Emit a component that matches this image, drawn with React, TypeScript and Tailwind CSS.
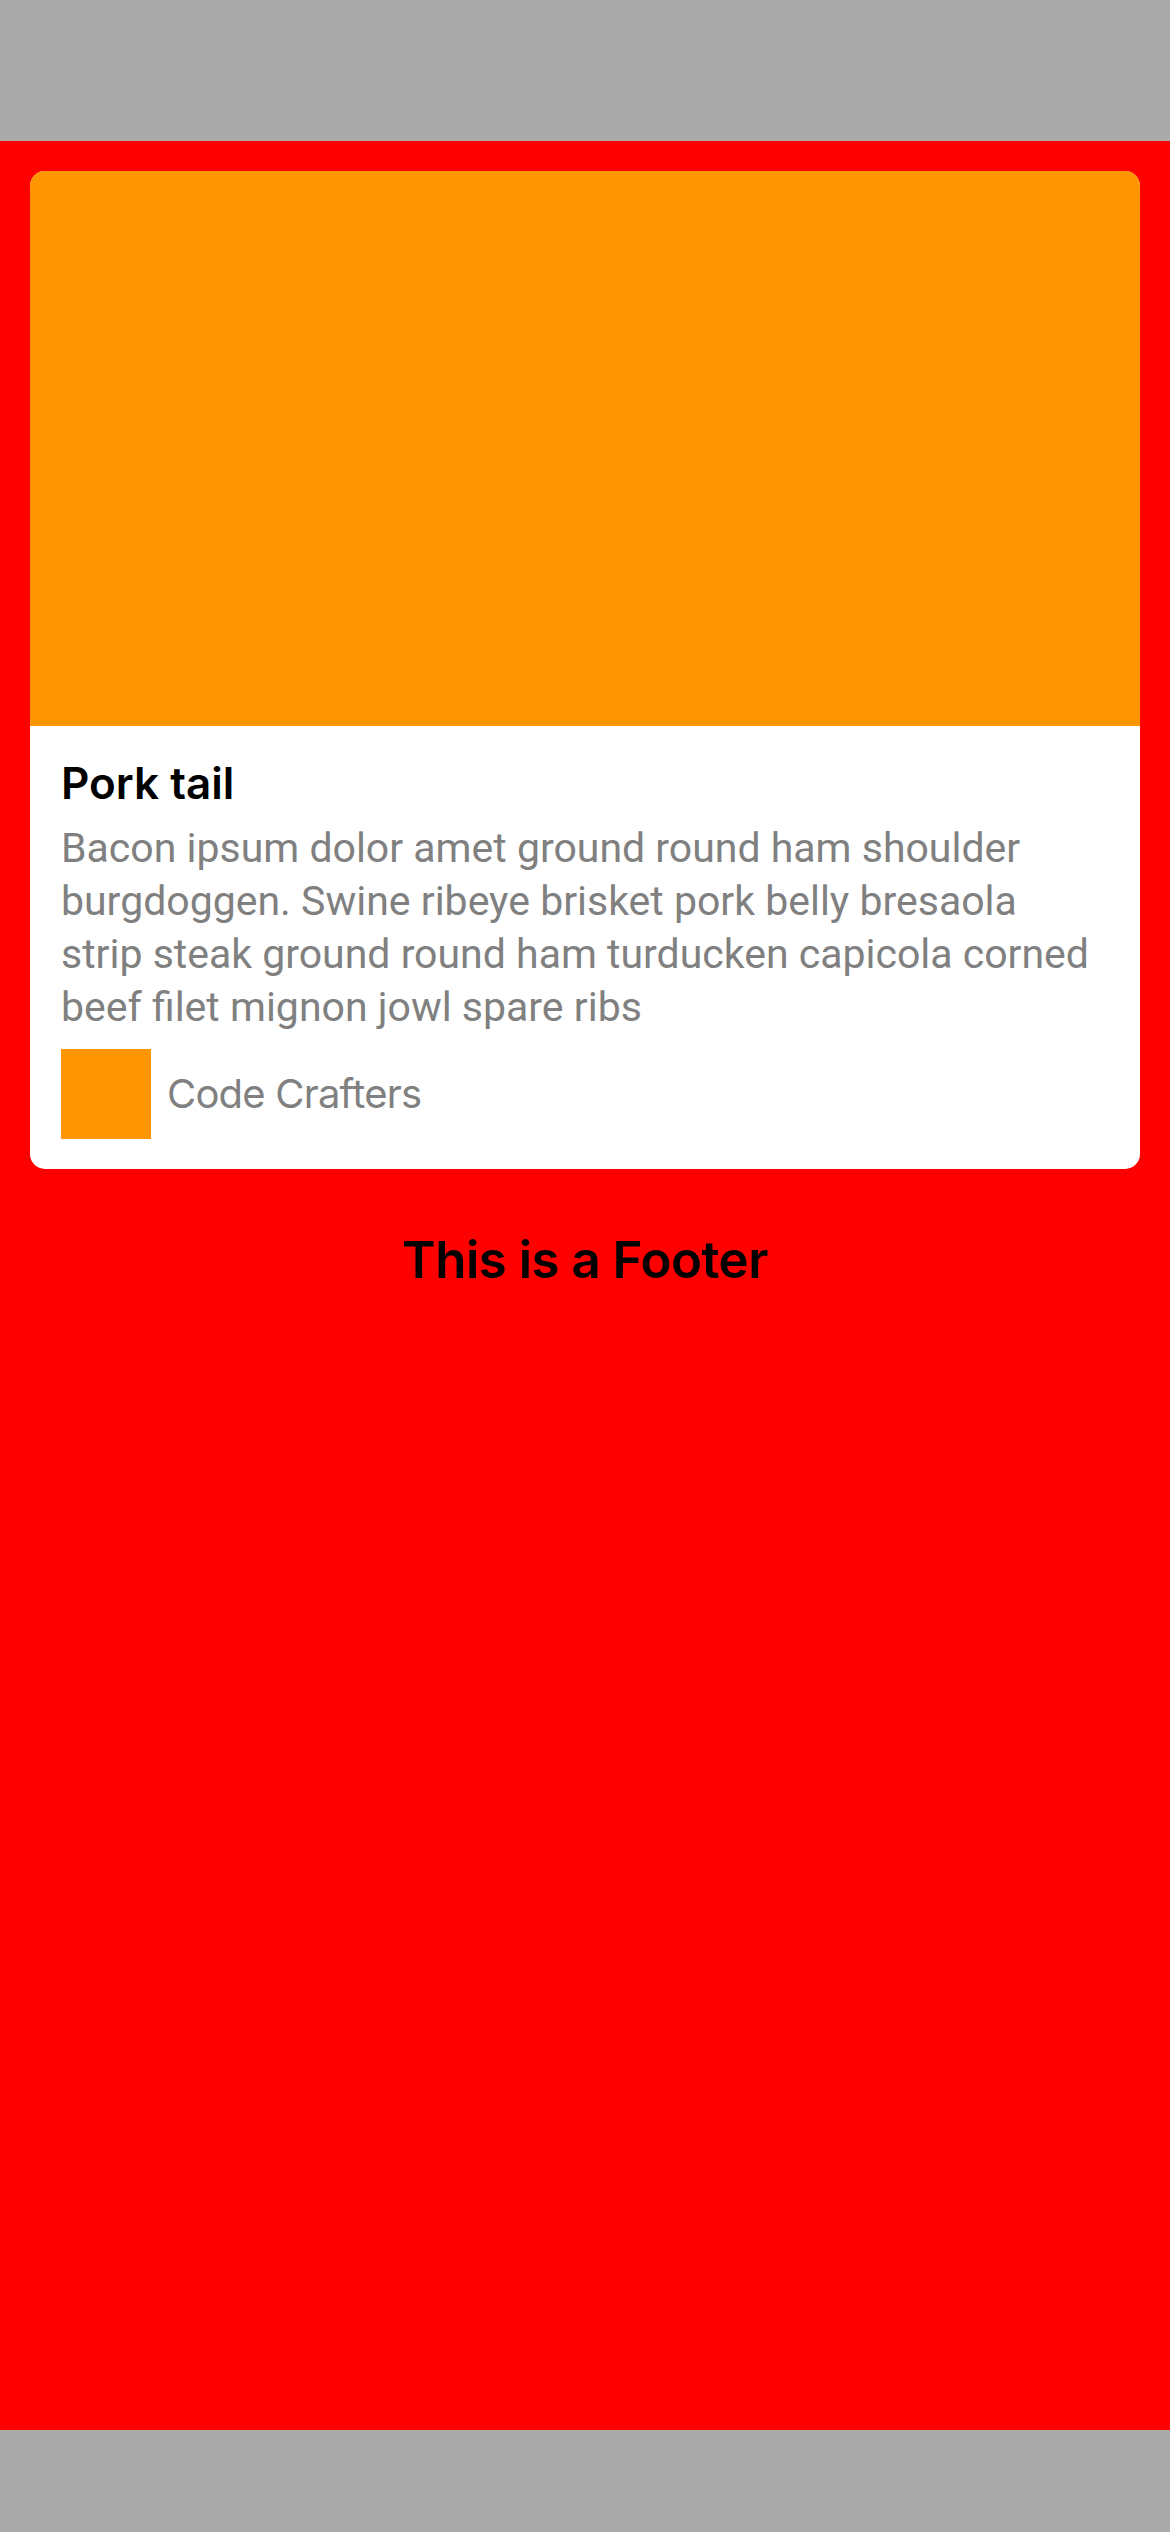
export default function App() {
  return (
    <div className="flex h-[2532px] w-[1170px] flex-col bg-[#aaaaaa] font-['Inter','Noto_Sans',sans-serif]">
      <div className="h-[141px] shrink-0" />

      <main className="flex h-[2289px] shrink-0 flex-col bg-[#ff0000] px-[30px] pt-[30px]">
        <article className="overflow-hidden rounded-[15px] bg-white">
          <div className="h-[555px] bg-[#ff9500]" />
          <div className="px-[31px] pt-[30px] pb-[30px]">
            <h2 className="text-[44px] leading-[54px] font-semibold text-black">Pork tail</h2>
            <p className="mt-[12px] w-[1040px] font-['Roboto',sans-serif] text-[41px] leading-[53px] text-[#808080]">
              Bacon ipsum dolor amet ground round ham shoulder burgdoggen. Swine ribeye brisket pork
              belly bresaola strip steak ground round ham turducken capicola corned beef filet mignon
              jowl spare ribs
            </p>
            <div className="mt-[15px] flex items-center gap-[16px]">
              <div className="h-[90px] w-[90px] bg-[#ff9500]" />
              <span className="text-[40px] text-[#808080] tracking-[-0.8px]">Code Crafters</span>
            </div>
          </div>
        </article>

        <footer className="mt-[60px] text-center text-[51px] leading-[62px] font-semibold text-black tracking-[-0.5px]">
          This is a Footer
        </footer>
      </main>

      <div className="flex-1" />
    </div>
  );
}
